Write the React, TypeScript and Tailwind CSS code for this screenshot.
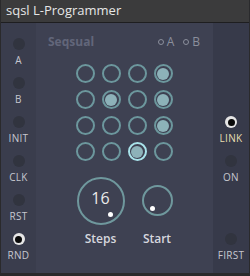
import React from "react";

const font = { fontFamily: '"Open Sans", "Noto Sans", sans-serif' };

function Jack({ label, active, labelClass }: { label: string; active?: boolean; labelClass?: string }) {
  return (
    <div className="flex h-[39px] flex-col items-center">
      {active ? (
        <div className="flex h-[12px] w-[12px] items-center justify-center rounded-full bg-[#e6e6e6]">
          <div className="h-[7px] w-[7px] rounded-full bg-[#0a0a0a]" />
        </div>
      ) : (
        <div className="h-[12px] w-[12px] rounded-full bg-[#31343f]" />
      )}
      <div className={`mt-[4px] text-[10px] leading-[12px] tracking-[0.3px] ${labelClass ?? "text-[#c6c7cf]"}`}>{label}</div>
    </div>
  );
}

function Empty() {
  return <div className="h-[39px]" />;
}

function Cell({ state }: { state: 0 | 1 | 2 }) {
  if (state === 2) {
    return (
      <div className="flex h-[19px] w-[19px] items-center justify-center rounded-full border-[2.5px] border-[#a9e3ea]">
        <div className="h-[12px] w-[12px] rounded-full bg-[#8db2b9]" />
      </div>
    );
  }
  return (
    <div className="flex h-[19px] w-[19px] items-center justify-center rounded-full border-2 border-[#6c979d]">
      {state === 1 && <div className="h-[12px] w-[12px] rounded-full bg-[#8db2b9]" />}
    </div>
  );
}

const grid: (0 | 1 | 2)[][] = [
  [0, 0, 0, 1],
  [0, 1, 0, 1],
  [0, 0, 0, 1],
  [0, 0, 2, 0],
];

export default function App() {
  return (
    <div className="h-[276px] w-[250px] bg-[#2a2a2c] px-[1px] pb-[3px]" style={font}>
      <div className="flex h-[23px] items-center border-b border-[#1e1e20] bg-[#3b3b3c] pl-[5px] text-[13px] text-[#e6e6e6]">
        sqsl L-Programmer
      </div>
      <div className="flex h-[250px]">
        <div className="flex w-[35px] flex-col bg-[#3a3d4d] pt-[15px]">
          <Jack label="A" />
          <Jack label="B" />
          <Jack label="INIT" />
          <Jack label="CLK" />
          <Jack label="RST" />
          <Jack label="RND" active />
        </div>
        <div className="flex w-[177px] flex-col bg-[#3e4152]">
          <div className="flex items-center justify-between pl-[12px] pr-[13px] pt-[10px]">
            <span className="text-[12px] font-bold text-[#62667a]">Seqsual</span>
            <div className="flex items-center gap-[9px] text-[12px] text-[#8b8f9c]">
              <span className="flex items-center gap-[3px]">
                <span className="inline-block h-[6px] w-[6px] rounded-full border border-[#8b8f9c]" />A
              </span>
              <span className="flex items-center gap-[3px]">
                <span className="inline-block h-[6px] w-[6px] rounded-full border border-[#8b8f9c]" />B
              </span>
            </div>
          </div>
          <div className="mt-[13px] flex flex-col items-center gap-[7px] pr-[1px]">
            {grid.map((row, i) => (
              <div key={i} className="flex gap-[7px]">
                {row.map((s, j) => (
                  <Cell key={j} state={s} />
                ))}
              </div>
            ))}
          </div>
          <div className="mt-[16px] flex items-start justify-center gap-[17px]">
            <div className="flex flex-col items-center">
              <div className="relative flex h-[48px] w-[48px] items-center justify-center rounded-full border-2 border-[#6f989d]">
                <span className="mb-[7px] text-[16px] text-[#eaeaea]">16</span>
                <span className="absolute left-[29px] top-[33px] h-[5px] w-[5px] rounded-full bg-white" />
              </div>
              <span className="mt-[5px] text-[12px] font-semibold text-[#d6d7de]">Steps</span>
            </div>
            <div className="flex flex-col items-center">
              <div className="mt-[8px] relative h-[31px] w-[31px] rounded-full border-2 border-[#6f989d]">
                <span className="absolute left-[6px] top-[19px] h-[5px] w-[5px] rounded-full bg-white" />
              </div>
              <span className="mt-[14px] text-[12px] font-semibold text-[#d6d7de]">Start</span>
            </div>
          </div>
        </div>
        <div className="flex flex-1 flex-col bg-[#373a4a] pt-[15px]">
          <Empty />
          <Empty />
          <Jack label="LINK" active labelClass="text-[#e6ddb0]" />
          <Jack label="ON" />
          <Empty />
          <Jack label="FIRST" />
        </div>
      </div>
    </div>
  );
}
